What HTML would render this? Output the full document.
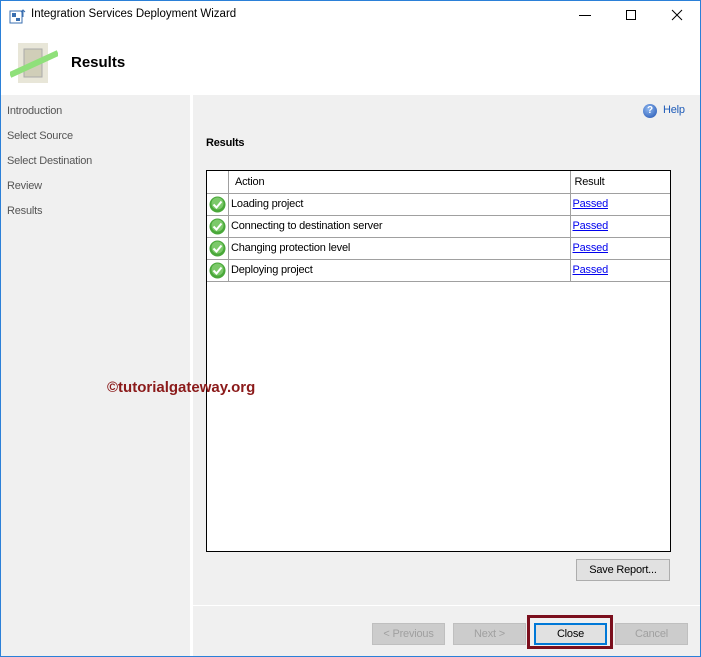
<!DOCTYPE html>
<html><head><meta charset="utf-8"><style>
*{margin:0;padding:0;box-sizing:border-box}
body{width:701px;height:657px;position:relative;overflow:hidden;background:#fff;font-family:"Liberation Sans",sans-serif;font-size:11px;letter-spacing:-0.2px;color:#000}
.abs{position:absolute}
.left{left:1px;top:95px;width:189px;height:561px;background:#f0f0f0}
.left div{position:absolute;left:6px;color:#555;font-size:11px}
.right{left:193px;top:95px;width:507px;height:561px;background:#f0f0f0}
.btn{position:absolute;height:22px;border:1px solid #adadad;background:#e1e1e1;text-align:center;line-height:20px;font-size:11px}
.dis{color:#a0a0a0;border-color:#bfbfbf;background:#cccccc}
table{border-collapse:collapse;position:absolute;left:207px;top:171px;width:463px}
td{border:1px solid #a0a0a0;height:22px;padding:0 2px;font-size:11px;background:#fff}
a{color:#0000ee;text-decoration:underline}
</style></head><body>
<div class="abs" style="left:0;top:0;width:701px;height:657px;border:1px solid #2b80d8;border-top:none;z-index:5;pointer-events:none"></div>
<div class="abs" style="left:0;top:0;width:701px;height:1px;background:#2b80d8"></div>
<svg class="abs" style="left:9px;top:8px" width="18" height="16"><rect x="1" y="3" width="12" height="12" fill="#fff" stroke="#3a6fb0"/><rect x="3" y="5" width="4" height="4" fill="#3a6fb0"/><rect x="7" y="10" width="4" height="3" fill="#3a6fb0"/><path d="M14 9V2M12 4l2-2 2 2" stroke="#3a6fb0" fill="none"/></svg>
<div class="abs" style="left:31px;top:8px;font-size:11.5px;letter-spacing:0">Integration Services Deployment Wizard</div>
<div class="abs" style="left:579px;top:15px;width:12px;height:1px;background:#000"></div>
<div class="abs" style="left:626px;top:10px;width:10px;height:10px;border:1px solid #000"></div>
<svg class="abs" style="left:671px;top:9px" width="12" height="12"><path d="M1 1L11 11M11 1L1 11" stroke="#000"/></svg>
<svg class="abs" style="left:10px;top:39px" width="48" height="48"><rect x="8" y="4" width="30" height="40" fill="#e8e6d8"/><rect x="14" y="10" width="18" height="28" fill="#d0ceb8" stroke="#aaa"/><path d="M0 36L48 14" stroke="#8fe07a" stroke-width="6"/></svg>
<div class="abs" style="left:71px;top:54px;font-size:15px;font-weight:bold;letter-spacing:0">Results</div>
<div class="abs left"><div style="top:10px">Introduction</div><div style="top:35px">Select Source</div><div style="top:60px">Select Destination</div><div style="top:85px">Review</div><div style="top:110px">Results</div></div>
<div class="abs right"></div>
<div class="abs" style="left:643px;top:104px;width:14px;height:14px;border-radius:50%;background:radial-gradient(circle at 40% 35%,#8fb8f0,#1e50b0);color:#fff;font-size:10px;font-weight:bold;text-align:center;line-height:14px">?</div>
<div class="abs" style="left:663px;top:104px;color:#1e5bb8">Help</div>
<div class="abs" style="left:206px;top:137px;font-weight:bold">Results</div>
<div class="abs" style="left:206px;top:170px;width:465px;height:382px;border:1px solid #000;background:#fff"></div>
<table>
<tr><td style="width:21px;border-left:none;border-top:none"></td><td style="padding-left:6px;border-top:none">Action</td><td style="width:100px;padding-left:4px;border-top:none;border-right:none">Result</td></tr>
<tr><td style="border-left:none"><svg width="17" height="17" style="vertical-align:middle"><circle cx="8.5" cy="8.5" r="8" fill="#4aa83a"/><circle cx="8.5" cy="7.5" r="6" fill="#7cc96a"/><path d="M4.5 8.5l3 3 5-6" stroke="#fff" stroke-width="2" fill="none"/></svg></td><td>Loading project</td><td style="border-right:none"><a>Passed</a></td></tr>
<tr><td style="border-left:none"><svg width="17" height="17" style="vertical-align:middle"><circle cx="8.5" cy="8.5" r="8" fill="#4aa83a"/><circle cx="8.5" cy="7.5" r="6" fill="#7cc96a"/><path d="M4.5 8.5l3 3 5-6" stroke="#fff" stroke-width="2" fill="none"/></svg></td><td>Connecting to destination server</td><td style="border-right:none"><a>Passed</a></td></tr>
<tr><td style="border-left:none"><svg width="17" height="17" style="vertical-align:middle"><circle cx="8.5" cy="8.5" r="8" fill="#4aa83a"/><circle cx="8.5" cy="7.5" r="6" fill="#7cc96a"/><path d="M4.5 8.5l3 3 5-6" stroke="#fff" stroke-width="2" fill="none"/></svg></td><td>Changing protection level</td><td style="border-right:none"><a>Passed</a></td></tr>
<tr><td style="border-left:none"><svg width="17" height="17" style="vertical-align:middle"><circle cx="8.5" cy="8.5" r="8" fill="#4aa83a"/><circle cx="8.5" cy="7.5" r="6" fill="#7cc96a"/><path d="M4.5 8.5l3 3 5-6" stroke="#fff" stroke-width="2" fill="none"/></svg></td><td>Deploying project</td><td style="border-right:none"><a>Passed</a></td></tr>
</table>
<div class="abs" style="left:107px;top:379px;color:#8b1a1a;font-weight:bold;font-size:15px;letter-spacing:0">©tutorialgateway.org</div>
<div class="btn" style="left:576px;top:559px;width:94px">Save Report...</div>
<div class="abs" style="left:193px;top:605px;width:507px;height:1px;background:#fff"></div>
<div class="btn dis" style="left:372px;top:623px;width:73px">&lt; Previous</div>
<div class="btn dis" style="left:453px;top:623px;width:73px">Next &gt;</div>
<div class="abs" style="left:527px;top:615px;width:86px;height:34px;border:3px solid #7b0f1d"></div>
<div class="btn" style="left:534px;top:623px;width:73px;border:2px solid #0078d7;line-height:18px">Close</div>
<div class="btn dis" style="left:615px;top:623px;width:73px">Cancel</div>
</body></html>
